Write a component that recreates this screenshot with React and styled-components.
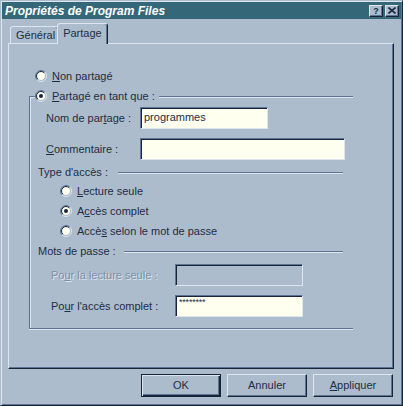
import React from 'react';
import styled, { createGlobalStyle } from 'styled-components';

const c = {
  face: '#adbccc',
  light: '#dde6ef',
  shadow: '#5d7592',
  dark: '#18243a',
  text: '#1e2c44',
  field: '#fffff0',
  title: '#346878',
  disabled: '#7d8fa6',
};

const Global = createGlobalStyle`
  html, body { margin: 0; padding: 0; background: ${c.face}; }
  body {
    font-family: "Liberation Sans", Arial, sans-serif;
    font-size: 11px;
    color: ${c.text};
  }
`;

const Window = styled.div`
  box-sizing: border-box;
  width: 403px;
  height: 406px;
  background: ${c.face};
  border: 1px solid;
  border-color: ${c.face} ${c.dark} ${c.dark} ${c.face};
  box-shadow: inset 1px 1px 0 ${c.light}, inset -1px -1px 0 ${c.shadow};
  padding: 1px;
  display: flex;
  flex-direction: column;
`;

const TitleBar = styled.div`
  height: 17px;
  background: ${c.title};
  display: flex;
  align-items: center;
  padding: 0 2px 0 3px;
`;

const Title = styled.div`
  flex: 1;
  color: #ffffff;
  font-weight: bold;
  font-style: italic;
  font-size: 12px;
  white-space: nowrap;
`;

const CaptionButton = styled.div`
  box-sizing: border-box;
  width: 14px;
  height: 12px;
  margin-left: 2px;
  background: ${c.face};
  border: 1px solid;
  border-color: ${c.light} ${c.dark} ${c.dark} ${c.light};
  box-shadow: inset -1px -1px 0 ${c.shadow};
  display: flex;
  align-items: center;
  justify-content: center;
  font-weight: bold;
  font-size: 9px;
  line-height: 10px;
  color: ${c.dark};
`;

const Body = styled.div`
  display: flex;
  flex-direction: column;
  padding: 4px 7px 0 6px;
`;

const TabStrip = styled.div`
  display: flex;
  align-items: flex-end;
  height: 20px;
  padding-left: 2px;
`;

const Tab = styled.div`
  box-sizing: border-box;
  height: ${(p) => (p.$active ? 21 : 17)}px;
  margin: 0 ${(p) => (p.$active ? -2 : 0)}px ${(p) => (p.$active ? -1 : 0)}px ${(p) => (p.$active ? -2 : 0)}px;
  padding: ${(p) => (p.$active ? '3px 5px 0 5px' : '2px 3px 0 5px')};
  border: 1px solid;
  border-bottom: none;
  border-color: ${c.light} ${c.dark} transparent ${c.light};
  box-shadow: inset -1px 0 0 ${c.shadow};
  border-radius: 3px 3px 0 0;
  background: ${c.face};
  position: relative;
  z-index: ${(p) => (p.$active ? 1 : 0)};
  line-height: 13px;
  white-space: nowrap;
`;

const Panel = styled.div`
  box-sizing: border-box;
  height: 326px;
  border: 1px solid;
  border-color: ${c.light} ${c.dark} ${c.dark} ${c.light};
  box-shadow: inset -1px -1px 0 ${c.shadow};
  padding: 22px 0 0 0;
  display: flex;
  flex-direction: column;
`;

const RadioRow = styled.div`
  display: flex;
  align-items: center;
  height: 20px;
  margin-left: ${(p) => p.$indent || 0}px;
  gap: 5px;
  white-space: nowrap;
`;

const Group = styled.div`
  margin-left: 20px;
  width: 324px;
  display: flex;
  flex-direction: column;
`;

const GroupHeader = styled.div`
  display: flex;
  align-items: center;
  height: 20px;
  white-space: nowrap;
`;

const Lead = styled.div`
  box-sizing: border-box;
  align-self: flex-end;
  width: 6px;
  height: 10px;
  border-top: 1px solid ${c.shadow};
  border-left: 1px solid ${c.shadow};
  box-shadow: inset 1px 1px 0 ${c.light};
`;

const Line = styled.div`
  flex: 1;
  height: 1px;
  background: ${c.shadow};
  box-shadow: 0 1px 0 ${c.light};
  margin-left: ${(p) => p.$gap || 4}px;
  margin-right: ${(p) => p.$end || 0}px;
`;

const GroupBody = styled.div`
  border-left: 1px solid ${c.shadow};
  border-bottom: 1px solid ${c.shadow};
  box-shadow: inset 1px 0 0 ${c.light}, 0 1px 0 ${c.light};
  padding: 1px 0 11px 0;
  display: flex;
  flex-direction: column;
`;

const FieldRow = styled.div`
  display: grid;
  grid-template-columns: ${(p) => p.$label}px ${(p) => p.$field}px;
  align-items: center;
  margin-left: ${(p) => p.$indent}px;
  margin-top: ${(p) => p.$top || 0}px;
  height: 22px;
  white-space: nowrap;
`;

const Label = styled.span`
  color: ${(p) => (p.$disabled ? c.disabled : c.text)};
  text-shadow: ${(p) => (p.$disabled ? `1px 1px 0 ${c.light}` : 'none')};
`;

const Field = styled.div`
  box-sizing: border-box;
  height: 22px;
  background: ${(p) => (p.$disabled ? c.face : c.field)};
  border: 1px solid;
  border-color: ${c.shadow} ${c.light} ${c.light} ${c.shadow};
  box-shadow: inset 1px 1px 0 ${c.dark};
  padding: 0 3px;
  line-height: 19px;
  overflow: hidden;
  white-space: nowrap;
`;

const Secret = styled.span`
  display: block;
  font-size: 9px;
  line-height: 9px;
  padding-top: 2px;
  letter-spacing: -0.2px;
`;

const Heading = styled.div`
  display: flex;
  align-items: center;
  height: ${(p) => p.$h}px;
  margin-top: ${(p) => p.$top || 0}px;
  margin-left: 8px;
  white-space: nowrap;
`;

const U = styled.span`
  text-decoration: underline;
  text-underline-offset: 1px;
`;

const ButtonRow = styled.div`
  display: flex;
  justify-content: flex-end;
  gap: 6px;
  margin-top: 5px;
  padding-right: 1px;
`;

const Button = styled.div`
  box-sizing: border-box;
  width: 80px;
  height: 23px;
  background: ${c.face};
  border: 1px solid;
  border-color: ${(p) =>
    p.$default ? c.dark : `${c.light} ${c.dark} ${c.dark} ${c.light}`};
  box-shadow: ${(p) =>
    p.$default
      ? `inset 1px 1px 0 ${c.light}, inset -1px -1px 0 ${c.dark}, inset -2px -2px 0 ${c.shadow}`
      : `inset -1px -1px 0 ${c.shadow}`};
  display: flex;
  align-items: center;
  justify-content: center;
  padding-bottom: 1px;
`;

function Radio({ checked }) {
  const a = 6 - 5.5 * 0.7071;
  const b = 6 + 5.5 * 0.7071;
  const ai = 6 - 4.5 * 0.7071;
  const bi = 6 + 4.5 * 0.7071;
  return (
    <svg width="12" height="12" viewBox="0 0 12 12" style={{ flex: 'none' }}>
      <circle cx="6" cy="6" r="4.5" fill={c.field} />
      <path d={`M${a} ${b} A5.5 5.5 0 0 1 ${b} ${a}`} stroke={c.shadow} fill="none" />
      <path d={`M${b} ${a} A5.5 5.5 0 0 1 ${a} ${b}`} stroke={c.light} fill="none" />
      <path d={`M${ai} ${bi} A4.5 4.5 0 0 1 ${bi} ${ai}`} stroke={c.dark} fill="none" />
      <path d={`M${bi} ${ai} A4.5 4.5 0 0 1 ${ai} ${bi}`} stroke={c.face} fill="none" />
      {checked && <circle cx="6" cy="6" r="2" fill={c.dark} />}
    </svg>
  );
}

function CloseGlyph() {
  return (
    <svg width="8" height="7" viewBox="0 0 8 7">
      <path d="M0.5 0.5 L7.5 6.5 M7.5 0.5 L0.5 6.5" stroke={c.dark} strokeWidth="1.6" />
    </svg>
  );
}

export default function App() {
  return (
    <>
      <Global />
      <Window>
        <TitleBar>
          <Title>Propriétés de Program Files</Title>
          <CaptionButton>?</CaptionButton>
          <CaptionButton>
            <CloseGlyph />
          </CaptionButton>
        </TitleBar>
        <Body>
          <TabStrip>
            <Tab>Général</Tab>
            <Tab $active>Partage</Tab>
          </TabStrip>
          <Panel>
            <RadioRow $indent={26}>
              <Radio />
              <span>
                <U>N</U>on partagé
              </span>
            </RadioRow>
            <Group>
              <GroupHeader>
                <Lead />
                <Radio checked />
                <span style={{ marginLeft: 5 }}>
                  <U>P</U>artagé en tant que :
                </span>
                <Line $gap={4} />
              </GroupHeader>
              <GroupBody>
                <FieldRow $indent={16} $label={94} $field={128}>
                  <Label>
                    Nom de par<U>t</U>age :
                  </Label>
                  <Field>programmes</Field>
                </FieldRow>
                <FieldRow $indent={16} $label={94} $field={205} $top={9}>
                  <Label>
                    <U>C</U>ommentaire :
                  </Label>
                  <Field />
                </FieldRow>
                <Heading $h={18} $top={3}>
                  <span>Type d'accès :</span>
                  <Line $gap={10} $end={10} />
                </Heading>
                <RadioRow $indent={30}>
                  <Radio />
                  <span>
                    <U>L</U>ecture seule
                  </span>
                </RadioRow>
                <RadioRow $indent={30}>
                  <Radio checked />
                  <span>
                    A<U>c</U>cès complet
                  </span>
                </RadioRow>
                <RadioRow $indent={30}>
                  <Radio />
                  <span>
                    Accè<U>s</U> selon le mot de passe
                  </span>
                </RadioRow>
                <Heading $h={20}>
                  <span>Mots de passe :</span>
                  <Line $gap={8} $end={10} />
                </Heading>
                <FieldRow $indent={21} $label={124} $field={128} $top={3}>
                  <Label $disabled>
                    Po<U>u</U>r la lecture seule :
                  </Label>
                  <Field $disabled />
                </FieldRow>
                <FieldRow $indent={21} $label={124} $field={128} $top={9}>
                  <Label>
                    Po<U>u</U>r l'accès complet :
                  </Label>
                  <Field>
                    <Secret>********</Secret>
                  </Field>
                </FieldRow>
              </GroupBody>
            </Group>
          </Panel>
          <ButtonRow>
            <Button $default>OK</Button>
            <Button>Annuler</Button>
            <Button>
              <span>
                <U>A</U>ppliquer
              </span>
            </Button>
          </ButtonRow>
        </Body>
      </Window>
    </>
  );
}
